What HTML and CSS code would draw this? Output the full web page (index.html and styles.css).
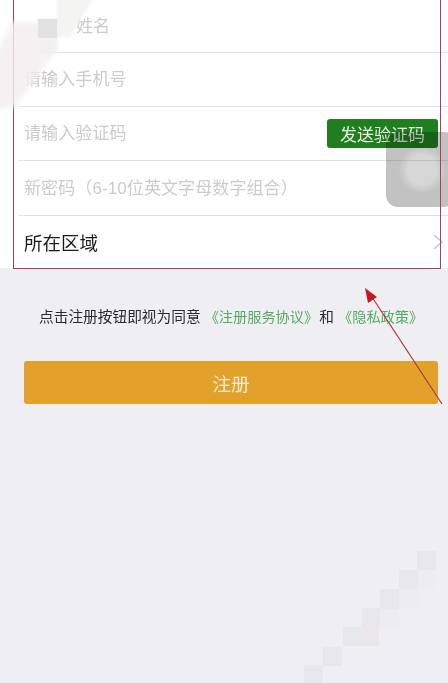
FILE: index.html
```html
<!DOCTYPE html>
<html lang="zh-CN">
<head>
<meta charset="utf-8">
<title>注册</title>
<link rel="stylesheet" href="styles.css">
</head>
<body>
<div class="page">
  <form class="form">
    <div class="row row-first"><span class="placeholder">姓名</span></div>
    <div class="row"><span class="placeholder">请输入手机号</span></div>
    <div class="row row-code">
      <span class="placeholder">请输入验证码</span>
      <button type="button" class="send">发送验证码</button>
    </div>
    <div class="row row-pass"><span class="placeholder">新密码（6-10位英文字母数字组合）</span></div>
    <div class="row row-last">
      <span class="label">所在区域</span>
      <svg class="chevron" width="12" height="18" viewBox="0 0 12 18"><path d="M2 2l8 7-8 7" fill="none" stroke="#c8c8cc" stroke-width="1.5"/></svg>
    </div>
  </form>
  <p class="agree">点击注册按钮即视为同意 <span class="link link-a">《注册服务协议》</span> 和 <span class="link link-b">《隐私政策》</span></p>
  <div class="submit-wrap"><button type="button" class="submit">注册</button></div>

  <div class="touch"><div class="touch-ring"><div class="touch-dot"></div></div></div>

  <div class="callout"></div>

  <svg class="mosaic mosaic-top" width="110" height="115" viewBox="0 0 110 115">
    <path class="mosaic-upper" d="M57 -4H95L70 37H57V52H40V20H57Z"/>
    <path class="mosaic-soft" d="M12 22H38V19H57V50L15 107L-6 110V58L6 34Z"/>
    <rect class="mosaic-cell" x="38" y="19" width="19" height="19"/>
  </svg>
  <svg class="mosaic mosaic-bottom" width="144" height="140" viewBox="0 0 144 140">
    <rect class="faint" x="95" y="27" width="18" height="19"/>
    <rect class="faint" x="76" y="46" width="20" height="19"/>
    <rect class="faint" x="58" y="65" width="19" height="19"/>
    <rect class="pinkish" x="39" y="84" width="18" height="19"/>
    <rect x="113" y="8" width="19" height="19"/>
    <rect x="95" y="27" width="19" height="19"/>
    <rect x="76" y="46" width="19" height="20"/>
    <rect x="58" y="65" width="18" height="19"/>
    <rect x="39" y="84" width="19" height="19"/>
    <rect x="19" y="104" width="19" height="19"/>
    <rect x="0" y="122" width="19" height="18"/>
  </svg>

  <svg class="arrow" width="90" height="125" viewBox="0 0 90 125">
    <path d="M80 116L8 6" fill="none" stroke="#a83a3e" stroke-width="1.2"/>
    <path d="M3 0L15 9L6 15Z" fill="#c01c20"/>
  </svg>
</div>
</body>
</html>
```
FILE: styles.css
```css
* { box-sizing: border-box; }
html, body { margin: 0; padding: 0; }
body {
  background: #efeef3;
  font-family: "Liberation Sans", "Noto Sans CJK SC", sans-serif;
}
.page {
  position: relative;
  width: 448px;
  height: 683px;
  overflow: hidden;
  background: #efeef3;
  filter: blur(0.4px);
}
.form {
  display: flex;
  flex-direction: column;
  background: #fff;
  height: 268px;
  padding-left: 18px;
}
.row {
  display: flex;
  align-items: center;
  justify-content: space-between;
  height: 54.3px;
  padding-left: 6px;
  padding-right: 10px;
  padding-bottom: 3px;
  border-bottom: 1px solid #e3e2e6;
}
.row-first { height: 52.5px; padding-bottom: 1px; }
.row-first .placeholder { margin-left: 52px; margin-bottom: 1px; }
.row-pass { height: 55px; }
.row-last { flex: 1; height: auto; border-bottom: 0; padding-top: 1px; padding-bottom: 1px; padding-right: 4px; }
.row-code { padding-bottom: 0; }
.row-code .placeholder { margin-bottom: 3px; }
.placeholder {
  font-size: 17px;
  letter-spacing: 0.1px;
  color: #cbcbcf;
  white-space: nowrap;
}
.label {
  font-size: 18.5px;
  color: #1a1a1a;
}
.send {
  width: 111px;
  height: 29px;
  border: 0;
  border-radius: 3px;
  padding: 0;
  background: #1f7f1f;
  color: #e6f2e2;
  font: inherit;
  font-size: 17px;
}
.chevron { margin-top: 0; }
.agree {
  margin: 0;
  padding-top: 39px;
  padding-left: 39px;
  font-size: 14.7px;
  line-height: 21px;
  color: #2a2a2e;
  white-space: nowrap;
  word-spacing: -2px;
}
.link { color: #55ab63; font-size: 14.2px; }
.link-a { margin-left: 2px; margin-right: -1px; }
.link-b { margin-left: 2px; }
.submit-wrap {
  padding: 33px 10px 0 24px;
}
.submit {
  display: block;
  width: 100%;
  height: 43px;
  border: 0;
  border-radius: 3px;
  padding: 0;
  background: #e2a12a;
  color: #fbeed2;
  font: inherit;
  font-size: 18.5px;
}
.touch {
  position: absolute;
  left: 386px;
  top: 132px;
  width: 70px;
  height: 75px;
  padding: 16px 0 0 14px;
  border-radius: 12px;
  background: #c2c2c2;
  mix-blend-mode: multiply;
}
.touch-ring {
  width: 44px;
  height: 44px;
  padding: 5px;
  border-radius: 50%;
  background: #cbcbcb;
  filter: blur(1.5px);
}
.touch-dot {
  width: 34px;
  height: 34px;
  border-radius: 50%;
  background: #d7d7d7;
}
.mosaic { position: absolute; }
.mosaic-top { left: 0; top: 0; }
.mosaic-upper { fill: #f4f4f3; filter: blur(1.5px); }
.mosaic-soft { fill: #f3eff1; opacity: 0.82; filter: blur(2px); }
.mosaic-cell { fill: #e2e1e2; }
.mosaic-bottom { left: 304px; top: 543px; fill: #e8e7eb; }
.mosaic-bottom .faint { fill: #edecf0; transform: translateX(18px); }
.mosaic-bottom .pinkish { fill: #ebe6ea; transform: translateX(18px); }
.callout {
  position: absolute;
  left: 13px;
  top: -4px;
  width: 428px;
  height: 273px;
  border: 1.5px solid #a8414f;
  pointer-events: none;
}
.arrow {
  position: absolute;
  left: 362px;
  top: 288px;
}
```
